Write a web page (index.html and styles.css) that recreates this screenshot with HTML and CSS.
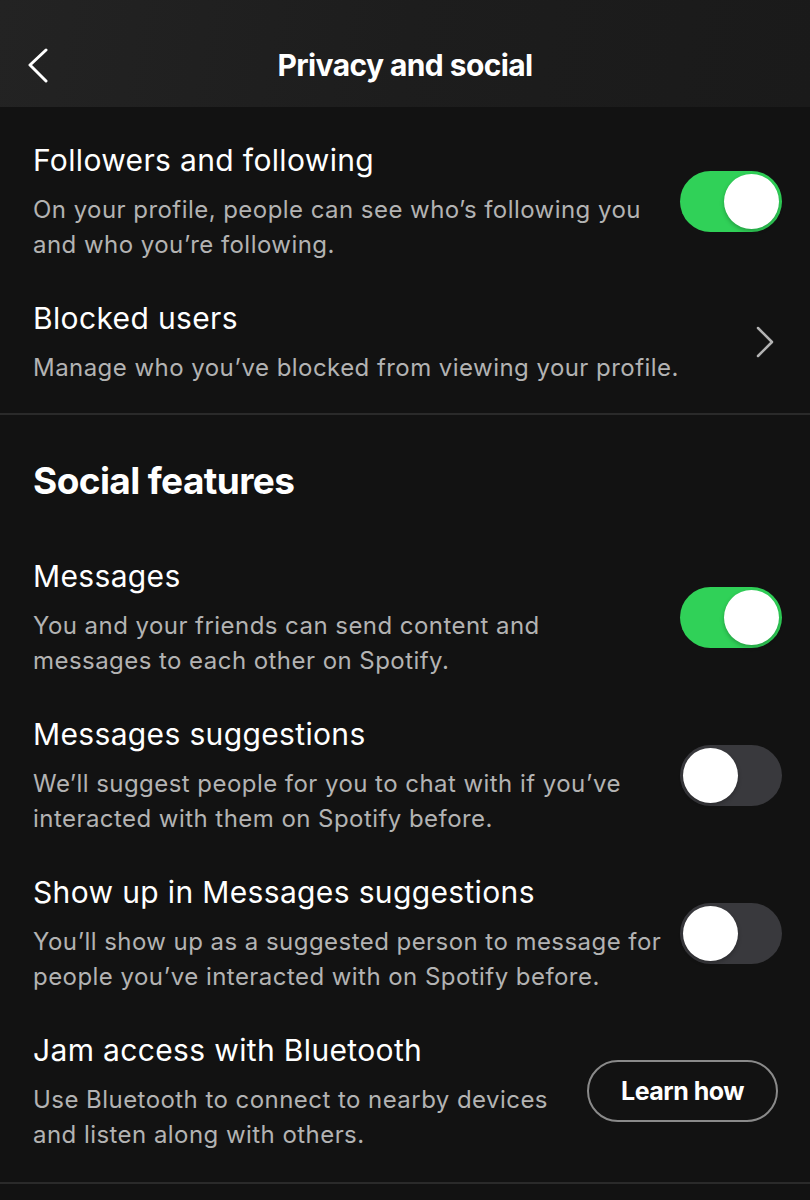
FILE: index.html
```html
<!DOCTYPE html>
<html lang="en">
<head>
    <meta charset="UTF-8">
    <meta name="viewport" content="width=device-width, initial-scale=1.0">
    <title>Privacy and social</title>
    <link rel="stylesheet" href="styles.css">
</head>
<body>
    <header class="topbar">
        <button class="back" aria-label="Back">
            <svg width="24" height="36" viewBox="0 0 24 36">
                <polyline points="19,3 3,18 19,34" fill="none" stroke="#fff" stroke-width="3" stroke-linecap="round" stroke-linejoin="round"/>
            </svg>
        </button>
        <h1>Privacy and social</h1>
    </header>

    <main>
        <section class="group first">
            <div class="row">
                <div class="text">
                    <div class="title">Followers and following</div>
                    <div class="desc">On your profile, people can see who’s following you and who you’re following.</div>
                </div>
                <span class="switch on"><span class="knob"></span></span>
            </div>
            <div class="row">
                <div class="text">
                    <div class="title">Blocked users</div>
                    <div class="desc">Manage who you’ve blocked from viewing your profile.</div>
                </div>
                <svg class="chevron" width="20" height="34" viewBox="0 0 20 34">
                    <polyline points="3,3 17,17 3,31" fill="none" stroke="#b3b3b3" stroke-width="2.5" stroke-linecap="round" stroke-linejoin="round"/>
                </svg>
            </div>
        </section>

        <section class="group">
            <h2>Social features</h2>
            <div class="row">
                <div class="text">
                    <div class="title">Messages</div>
                    <div class="desc">You and your friends can send content and messages to each other on Spotify.</div>
                </div>
                <span class="switch on"><span class="knob"></span></span>
            </div>
            <div class="row">
                <div class="text">
                    <div class="title">Messages suggestions</div>
                    <div class="desc">We’ll suggest people for you to chat with if you’ve interacted with them on Spotify before.</div>
                </div>
                <span class="switch"><span class="knob"></span></span>
            </div>
            <div class="row">
                <div class="text">
                    <div class="title">Show up in Messages suggestions</div>
                    <div class="desc">You’ll show up as a suggested person to message for people you’ve interacted with on Spotify before.</div>
                </div>
                <span class="switch"><span class="knob"></span></span>
            </div>
            <div class="row">
                <div class="text">
                    <div class="title">Jam access with Bluetooth</div>
                    <div class="desc">Use Bluetooth to connect to nearby devices and listen along with others.</div>
                </div>
                <button class="pill">Learn how</button>
            </div>
        </section>
    </main>
</body>
</html>
```

FILE: styles.css
```css
body {
    margin: 0;
    background-color: #121212;
    color: #fff;
    font-family: Inter, "Noto Sans", sans-serif;
}

.topbar {
    height: 107px;
    box-sizing: border-box;
    padding-top: 22px;
    display: flex;
    align-items: center;
    justify-content: center;
    position: relative;
    background: linear-gradient(100deg, #232323 0%, #1d1d1d 50%, #1a1a1a 100%);
}
.topbar h1 {
    margin: 0;
    font-size: 30px;
    font-weight: 700;
    letter-spacing: -0.6px;
}
.back {
    position: absolute;
    left: 27px;
    top: 47px;
    padding: 0;
    border: none;
    background: none;
    line-height: 0;
}

.group {
    border-bottom: 2px solid #2a2a2a;
    padding-bottom: 12px;
}
.group.first {
    padding-top: 15px;
    padding-bottom: 10px;
}
.group h2 {
    margin: 0;
    padding: 44px 33px 35px;
    font-size: 37px;
    line-height: 44px;
    font-weight: 700;
    letter-spacing: -0.6px;
}

.row {
    display: flex;
    align-items: center;
    gap: 17px;
    padding: 18px 28px 18px 33px;
}
.text {
    flex: 1;
}
.title {
    font-size: 30px;
    line-height: 40px;
    letter-spacing: 0.35px;
}
.desc {
    margin-top: 12px;
    font-size: 24px;
    line-height: 35px;
    color: #b3b3b3;
    letter-spacing: 0.45px;
}

.switch {
    flex: none;
    width: 102px;
    height: 61px;
    border-radius: 31px;
    background-color: #39393d;
    display: flex;
    align-items: center;
    padding: 0 3px;
    box-sizing: border-box;
}
.switch.on {
    background-color: #30d158;
    justify-content: flex-end;
}
.knob {
    width: 55px;
    height: 55px;
    border-radius: 50%;
    background: #fff;
    box-shadow: 0 2px 4px rgba(0,0,0,0.25);
}

.chevron {
    flex: none;
    margin-right: 7px;
}

.pill {
    flex: none;
    width: 191px;
    height: 62px;
    margin-right: 4px;
    border: 2px solid #8a8a8a;
    border-radius: 31px;
    background: none;
    color: #fff;
    font-family: inherit;
    font-size: 25px;
    font-weight: 700;
    letter-spacing: -0.5px;
}
```
